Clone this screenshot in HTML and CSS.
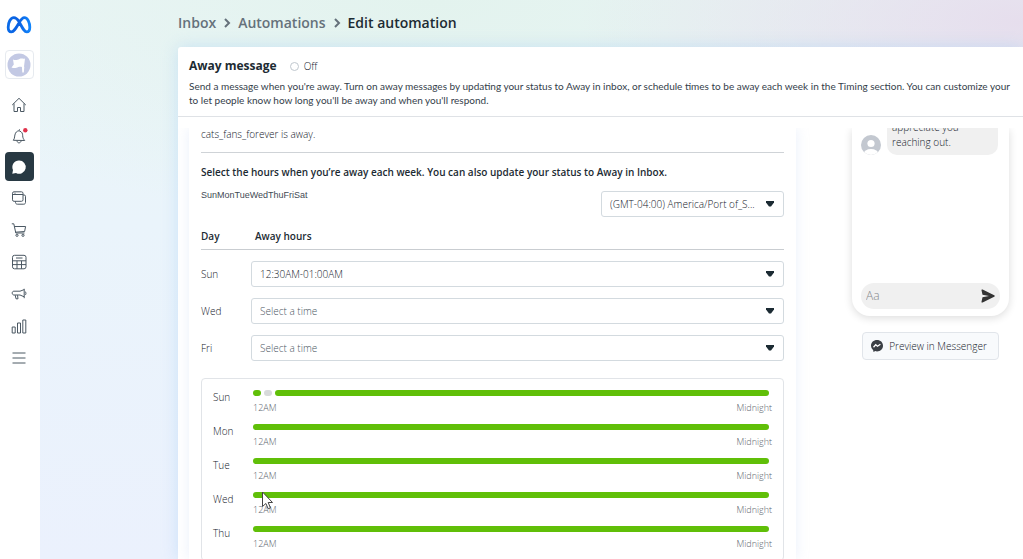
FILE: index.html
```html
<!DOCTYPE html>
<html lang="en">
<head>
<meta charset="utf-8">
<title>Edit automation</title>
<link rel="stylesheet" href="styles.css">
</head>
<body>
<div class="app">
  <nav class="rail" aria-label="Main">
    <a class="brand" href="#" aria-label="Meta">
      <svg width="26" height="18" viewBox="0 0 26 18" fill="none">
        <defs><linearGradient id="meta" x1="0" x2="1"><stop offset="0" stop-color="#0a6be8"/><stop offset=".45" stop-color="#0a5fe0"/><stop offset="1" stop-color="#1184fb"/></linearGradient></defs>
        <path d="M13 5.6C11.500 3.300 10 1.700 7.900 1.700 4.300 1.700 2.200 6.700 2.200 11.200 2.200 14 3.300 15.900 5.300 15.900 7.700 15.900 9.200 13.500 13 7 15 3.600 16.300 1.700 18.400 1.700 21.800 1.700 23.800 6.700 23.800 11.200 23.800 14 22.700 15.900 20.800 15.900 18.300 15.900 16.800 12.500 13 5.600Z" stroke="url(#meta)" stroke-width="2.800" stroke-linejoin="round"/>
      </svg>
    </a>
    <a class="page-pic" href="#" aria-label="Page">
      <svg width="24" height="24" viewBox="0 0 24 24"><circle cx="12" cy="12" r="11.500" fill="#c3c9e4"/><path d="M6 6.500c2.500 1.200 4.500.3 6.500-.6s3.500.2 5.500-.4l-1 8 .3.400-.5 5.600h-1.500l-.4-5.500c-2.300-.5-4 .3-5.500.8-1.600.5-3 .4-4.900-.3l2.300-3z" fill="#fff"/></svg>
    </a>
    <a class="item" href="#" aria-label="Home">
      <svg viewBox="0 0 16 16"><path d="M1.200 8 8 1.300 14.800 8M3 6.500v8h3.500V10.500h3v4H13v-8"/></svg>
    </a>
    <a class="item" href="#" aria-label="Notifications">
      <svg viewBox="0 0 16 16"><path d="M2.300 12.300c1.700-1.800 1-4.800 2.200-7.100C5.500 3.300 7 2.600 8.500 3c2.400.7 3.200 2.600 3.200 4.800 0 2 .7 3.200 2 4.700z M6 12.600c.2 3 3.600 3 4.200.1M8 2.800l.5-1.500"/><circle class="dot" cx="14.300" cy="2.200" r="2.200"/></svg>
    </a>
    <a class="item current" href="#" aria-label="Inbox">
      <svg viewBox="0 0 16 16"><path d="M8 1.500a6.600 6.600 0 1 1-3 12.400L1.300 14.700 2 11A6.600 6.600 0 0 1 8 1.500z"/></svg>
    </a>
    <a class="item" href="#" aria-label="Content">
      <svg viewBox="0 0 16 16"><rect x="1.500" y="1.800" width="10.500" height="9.500" rx="1.500"/><path d="M1.500 4.500H12M3.500 3.200h1M12 5h1.200c.8 0 1.300.5 1.300 1.300v6.200c0 1-.7 1.700-1.700 1.700H6.300c-1 0-1.800-.7-1.800-1.700v-1.200"/></svg>
    </a>
    <a class="item" href="#" aria-label="Commerce">
      <svg viewBox="0 0 16 16"><path d="M.8 1.800h2l2 9.200h8.700M3.400 4.500h11.200l-1 5-9 .7"/><circle cx="6" cy="13.300" r="1.100"/><circle cx="12" cy="13.300" r="1.100"/></svg>
    </a>
    <a class="item" href="#" aria-label="Planner">
      <svg viewBox="0 0 16 16"><rect x="1.500" y="1.300" width="13.500" height="13.500" rx="2"/><path d="M5 4h6.500M1.500 6.800H15M1.500 10.600H15M6 6.800v8M10.500 6.800v8"/></svg>
    </a>
    <a class="item" href="#" aria-label="Ads">
      <svg viewBox="0 0 16 16"><path d="M13.200 2.800v9.400M13.200 3.600 9 5.200H3C1.800 5.200 1.200 6 1.200 7s.6 2 1.800 2h6l4.200 1.800M14 5.500c1.300.5 1.300 3 0 3.600M4.200 9.200l.8 3.600h2L6.500 9.200"/></svg>
    </a>
    <a class="item" href="#" aria-label="Insights">
      <svg viewBox="0 0 16 16"><path d="M1.200 9h3v6h-3zM6.500 5h3v10h-3zM11.800 2h3v13h-3z"/></svg>
    </a>
    <a class="item" href="#" aria-label="All tools">
      <svg viewBox="0 0 16 16"><path d="M1.500 3h13M1.500 8h13M1.500 13h13"/></svg>
    </a>
  </nav>

  <main class="main">
    <nav class="crumbs" aria-label="Breadcrumb">
      <a href="#">Inbox</a>
      <svg width="8" height="10" viewBox="0 0 8 10"><path d="M2 1l4 4-4 4"/></svg>
      <a href="#">Automations</a>
      <svg width="8" height="10" viewBox="0 0 8 10"><path d="M2 1l4 4-4 4"/></svg>
      <span class="here">Edit automation</span>
    </nav>

    <section class="card">
      <header class="card-head">
        <div class="title-row">
          <h1>Away message</h1>
          <label class="status"><input type="radio" name="status">Off</label>
        </div>
        <p>Send a message when you're away. Turn on away messages by updating your status to Away in inbox, or schedule times to be away each week in the Timing section. You can customize your<br>to let people know how long you'll be away and when you'll respond.</p>
      </header>

      <div class="scroller">
        <div class="panel">
          <p class="note">cats_fans_forever is away.</p>
          <h2>Select the hours when you’re away each week. You can also update your status to Away in Inbox.</h2>
          <div class="zone-row">
            <span class="days">SunMonTueWedThuFriSat</span>
            <div class="pick zone">
              <select aria-label="Time zone"><option>(GMT-04:00) America/Port of_S...</option></select>
              <svg viewBox="0 0 8 6"><path d="M0 0h8v1.500L5 5.500H3L0 1.500z"/></svg>
            </div>
          </div>

          <table class="hours">
            <thead><tr><th class="day" scope="col">Day</th><th scope="col">Away hours</th></tr></thead>
            <tbody>
              <tr><td><label for="sun">Sun</label></td><td><div class="pick"><select id="sun"><option>12:30AM-01:00AM</option></select><svg viewBox="0 0 8 6"><path d="M0 0h8v1.500L5 5.500H3L0 1.500z"/></svg></div></td></tr>
              <tr><td><label for="wed">Wed</label></td><td><div class="pick"><select id="wed" class="empty"><option>Select a time</option></select><svg viewBox="0 0 8 6"><path d="M0 0h8v1.500L5 5.500H3L0 1.500z"/></svg></div></td></tr>
              <tr><td><label for="fri">Fri</label></td><td><div class="pick"><select id="fri" class="empty"><option>Select a time</option></select><svg viewBox="0 0 8 6"><path d="M0 0h8v1.500L5 5.500H3L0 1.500z"/></svg></div></td></tr>
            </tbody>
          </table>

          <div class="week">
            <div class="row"><span class="name">Sun</span><div><div class="track split"><i class="on short"></i><i class="off short"></i><i class="on"></i></div><div class="ends"><span>12AM</span><span>Midnight</span></div></div></div>
            <div class="row"><span class="name">Mon</span><div><div class="track"><i class="on"></i></div><div class="ends"><span>12AM</span><span>Midnight</span></div></div></div>
            <div class="row"><span class="name">Tue</span><div><div class="track"><i class="on"></i></div><div class="ends"><span>12AM</span><span>Midnight</span></div></div></div>
            <div class="row"><span class="name">Wed</span><div><div class="track"><i class="on"></i></div><div class="ends"><span>12AM</span><span>Midnight</span></div></div></div>
            <div class="row"><span class="name">Thu</span><div><div class="track"><i class="on"></i></div><div class="ends"><span>12AM</span><span>Midnight</span></div></div></div>
          </div>
        </div>

        <aside class="preview">
          <div class="phone">
            <div class="chat">
              <svg class="avatar" viewBox="0 0 20 20"><defs><clipPath id="face"><circle cx="10" cy="10" r="10"/></clipPath></defs><g clip-path="url(#face)"><path fill="#c3c8d0" d="M0 0h20v20H0z"/><circle cx="10" cy="8.500" r="3.600" fill="#fff"/><ellipse cx="10" cy="19" rx="7.500" ry="5" fill="#fff"/></g></svg>
              <p class="bubble">appreciate you reaching out.</p>
            </div>
            <div class="compose">
              <input type="text" placeholder="Aa" aria-label="Message">
              <button type="button" aria-label="Send"><svg width="14" height="14" viewBox="0 0 14 14"><path d="M.5 1.300C.3.600 1 .2 1.600.5l11.600 5.700c.7.300.7 1.300 0 1.600L1.600 13.500c-.6.300-1.300-.1-1.100-.8L1.500 8.200 8 7 1.500 5.800z" fill="#333"/></svg></button>
            </div>
          </div>
          <button type="button" class="open">
            <svg width="12" height="12" viewBox="0 0 12 12"><path d="M6 0c3.400 0 6 2.400 6 5.700S9.400 11.400 6 11.400c-.6 0-1.200-.1-1.700-.3L2.500 12l-.3-1.700A5.600 5.600 0 0 1 0 5.700C0 2.400 2.600 0 6 0z" fill="#3b3f45"/><path d="M2.500 7.200 4.700 4.700l1.800 1.500 2.900-2" fill="none" stroke="#fff" stroke-width="1.300"/></svg>
            Preview in Messenger
          </button>
        </aside>
      </div>
    </section>
  </main>
</div>
<svg class="cursor" width="13" height="19" viewBox="0 0 13 19"><path d="M1.500 1v14.500l3.400-3 2.300 5.300 2.200-1L7.200 11.500h4.300z" fill="#fff" stroke="#444" stroke-width="1"/></svg>
</body>
</html>
```
FILE: styles.css
```css
* { box-sizing: border-box; }
body {
  margin: 0;
  font: 300 10px/14px "Open Sans", "Noto Sans", sans-serif;
  color: #14202a;
  overflow: hidden;
}
h1, h2, p { margin: 0; }
a { color: inherit; text-decoration: none; }
select, input, button { font: inherit; color: inherit; }

.app { display: flex; height: 100vh; }

.rail {
  flex: none;
  width: 40px;
  padding: 15px 6px 0 4px;
  background: #fff;
  display: flex;
  flex-direction: column;
  align-items: center;
  gap: 2px;
}
.rail a { display: flex; align-items: center; justify-content: center; flex: none; }
.brand { height: 20px; margin-bottom: 13px; }
.page-pic {
  width: 29px;
  height: 29px;
  border: 1px solid #e6eaef;
  border-radius: 4px;
  margin-bottom: 9px;
}
.item { width: 29px; height: 29px; border-radius: 4px; }
.item svg { width: 16px; height: 16px; fill: none; stroke: #4b5863; stroke-width: 1; overflow: visible; }
.item .dot { fill: #e0314b; stroke: none; }
.item.current { background: #283943; }
.item.current svg { fill: #fff; stroke: none; }
.item.current ~ .item { height: 30px; }

.main {
  flex: 1;
  min-width: 0;
  padding-left: 138px;
  display: flex;
  flex-direction: column;
  background:
    radial-gradient(ellipse 45% 30% at 100% 4%, #e6deed 0%, rgba(230, 222, 237, 0) 100%),
    radial-gradient(ellipse 60% 40% at 40% 0%, #e3f3ee 0%, rgba(227, 243, 238, 0) 100%),
    linear-gradient(180deg, #eaf5f6 0%, #eaf4fb 40%, #ebf1fd 100%);
}
.crumbs {
  height: 46px;
  flex: none;
  display: flex;
  align-items: center;
  gap: 7px;
  font-size: 14px;
  line-height: 20px;
  font-weight: 600;
  color: #65717b;
}
.crumbs svg { fill: none; stroke: #65717b; stroke-width: 2; }
.here { color: #1c2b33; }

.card {
  flex: 1;
  min-height: 0;
  display: flex;
  flex-direction: column;
  background: #fff;
  margin-top: 1px;
  border-top-left-radius: 3px;
  box-shadow: 0 0 16px rgba(160, 205, 245, .45);
}
.card-head { padding: 12px 0 8px 11px; border-bottom: 1px solid #dfe2e6; height: 70px; flex: none; }
.card-head p { font-family: Lato, "Open Sans", sans-serif; font-weight: 400; color: #34404a; }
.title-row { display: flex; align-items: center; gap: 13px; height: 14px; margin-bottom: 6px; }
h1 { font-size: 12px; line-height: 16px; font-weight: 700; color: #1c2b33; }
.status { display: flex; align-items: center; gap: 5px; }
.status input { appearance: none; width: 9px; height: 9px; margin: 0; border: 1px solid #c0c7ce; border-radius: 50%; }

.scroller { flex: 1; min-height: 0; margin-top: 11px; overflow: hidden; display: flex; padding-left: 11px; }
.panel { flex: 1; min-width: 0; padding: 0 12px; box-shadow: 0 0 12px rgba(170, 195, 240, .25); }
.note { height: 25px; line-height: 12px; border-bottom: 1px solid #cfd3d7; }
h2 { font-size: 10px; line-height: 14px; font-weight: 600; color: #1c2b33; margin: 12px 0 12px; }
.zone-row { display: flex; justify-content: space-between; align-items: flex-start; }
.days { font: 9px/8px "Liberation Sans", Arial, sans-serif; color: #3f4a54; }

.pick { position: relative; }
.pick select {
  appearance: none;
  display: block;
  width: 100%;
  height: 26px;
  padding: 0 24px 0 8px;
  border: 1px solid #d3dadf;
  border-radius: 3px;
  background: #fff;
}
.pick select.empty { color: #4b565f; }
.pick svg { position: absolute; right: 10px; top: 10px; width: 8px; height: 6px; fill: #1c2b33; pointer-events: none; }
.zone { width: 183px; }

.hours { width: 100%; border-collapse: collapse; margin-top: 8px; }
.hours th { text-align: left; font-weight: 600; color: #1c2b33; padding: 4px 4px 6px; border-bottom: 1px solid #c9cdd1; }
.hours .day { width: 50px; padding-left: 0; }
.hours td { padding: 11px 0 0; }

.week { margin-top: 17px; border: 1px solid #e1e4e8; border-radius: 4px; padding: 11px 11px 8px; display: grid; gap: 8px; }
.row { display: grid; grid-template-columns: 40px 1fr; }
.track { display: flex; gap: 3px; height: 6px; margin-right: 3px; }
.track i { flex: 1; border-radius: 3px; }
.track .on { background: #60bf08; }
.track .off { background: #d8dadb; }
.track .short { flex: none; width: 8px; }
.ends { display: flex; justify-content: space-between; margin-top: 4px; font-size: 9px; line-height: 16px; color: #5d666e; }

.preview { flex: none; width: 227px; padding: 0 14px 0 56px; display: flex; flex-direction: column; align-items: center; }
.phone {
  width: 100%;
  height: 188px;
  flex: none;
  padding: 0 9px 7px;
  border-radius: 0 0 18px 18px;
  box-shadow: 0 2px 8px rgba(0, 0, 0, .14);
  display: flex;
  flex-direction: column;
  justify-content: space-between;
}
.chat { display: flex; align-items: flex-end; gap: 6px; margin-top: -8px; }
.avatar { width: 20px; height: 20px; flex: none; }
.bubble { flex: 1; margin-right: 2px; padding: 0 24px 5px 5px; background: #f0f0f0; border-radius: 0 0 10px 10px; line-height: 15px; }
.compose { display: flex; align-items: center; height: 26px; padding: 0 5px; background: #f0f0f0; border-radius: 13px; }
.compose input { flex: 1; min-width: 0; border: 0; padding: 0; background: none; font-size: 12px; outline: 0; }
.compose input::placeholder { color: #85898d; }
.compose button { border: 0; padding: 0; background: none; display: flex; }
.open {
  margin-top: 16px;
  height: 28px;
  padding: 0 11px 0 8px;
  display: flex;
  align-items: center;
  gap: 6px;
  border: 1px solid #e1e5ea;
  border-radius: 4px;
  background: #f8fafc;
  white-space: nowrap;
}
.cursor { position: absolute; left: 261px; top: 491px; }
```
